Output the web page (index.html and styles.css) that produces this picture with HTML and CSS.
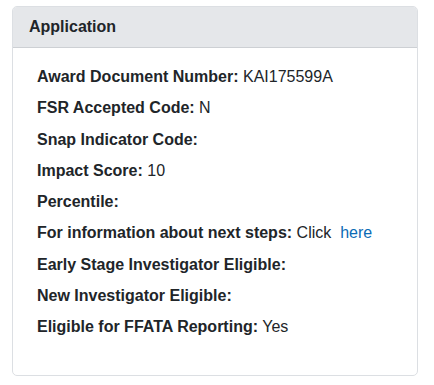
FILE: index.html
```html
<!DOCTYPE html>
<html lang="en">
<head>
    <meta charset="UTF-8">
    <meta name="viewport" content="width=device-width, initial-scale=1.0">
    <title>Application</title>
    <link rel="stylesheet" href="styles.css">
</head>
<body>
    <div class="card">
        <div class="card-header">Application</div>
        <div class="card-body">
            <ul class="detail-list">
                <li><strong>Award Document Number:</strong> KAI175599A</li>
                <li><strong>FSR Accepted Code:</strong> N</li>
                <li><strong>Snap Indicator Code:</strong></li>
                <li><strong>Impact Score:</strong> 10</li>
                <li><strong>Percentile:</strong></li>
                <li><strong>For information about next steps:</strong> Click &nbsp;<a href="#">here</a></li>
                <li><strong>Early Stage Investigator Eligible:</strong></li>
                <li><strong>New Investigator Eligible:</strong></li>
                <li><strong>Eligible for FFATA Reporting:</strong> Yes</li>
            </ul>
        </div>
    </div>
</body>
</html>
```

FILE: styles.css
```css
body {
    font-family: "Liberation Sans", Arial, sans-serif;
    font-size: 16px;
    line-height: 1.5;
    color: #212529;
    background-color: #fff;
    margin: 0;
    padding: 6px 16px 0 12px;
}
.card {
    border: 1px solid #dcdfe3;
    border-radius: 5px;
    background-color: #fff;
    overflow: hidden;
}
.card-header {
    background-color: #e5e7ea;
    border-bottom: 1px solid #cdd0d4;
    padding: 8px 16px;
    font-weight: bold;
}
.card-body {
    padding: 17px 24px 36px 24px;
}
.detail-list {
    list-style: none;
    margin: 0;
    padding: 0;
    display: flex;
    flex-direction: column;
    gap: 7.25px;
}
.detail-list strong {
    font-weight: bold;
}
.detail-list a {
    color: #0b6bb5;
    text-decoration: none;
}
```
